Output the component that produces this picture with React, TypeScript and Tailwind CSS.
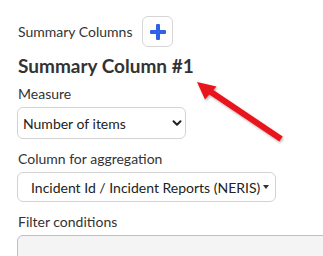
import React from "react";

function PlusIcon() {
  return (
    <svg width="16" height="16" viewBox="0 0 16 16" aria-hidden="true">
      <rect x="6" y="0" width="4" height="16" rx="1" fill="#2f63e6" />
      <rect x="0" y="6" width="16" height="4" rx="1" fill="#2f63e6" />
    </svg>
  );
}

function Chevron() {
  return (
    <svg width="10" height="10" viewBox="0 0 10 10" aria-hidden="true">
      <path
        d="M1.5 3.2L5 6.7l3.5-3.5"
        fill="none"
        stroke="#222"
        strokeWidth={2}
        strokeLinecap="round"
        strokeLinejoin="round"
      />
    </svg>
  );
}

function Pointer() {
  return (
    <svg
      className="pointer-events-none absolute left-0 top-0"
      width="323"
      height="256"
      viewBox="0 0 323 256"
      aria-hidden="true"
    >
      <defs>
        <filter id="shadow" x="-20%" y="-20%" width="140%" height="140%">
          <feDropShadow dx="1" dy="1.5" stdDeviation="1" floodColor="#000" floodOpacity="0.3" />
        </filter>
      </defs>
      <g filter="url(#shadow)">
        <line x1="281" y1="139" x2="208" y2="90" stroke="#e8131b" strokeWidth={6} strokeLinecap="butt" />
        <polygon points="197,82 216.5,86.5 205,99.5" fill="#e8131b" />
      </g>
    </svg>
  );
}

export default function App() {
  return (
    <div className="relative h-[256px] w-[323px] overflow-hidden bg-white font-['Lato',sans-serif] text-[14px] text-[#333]">
      <div className="pl-[17px] pt-[16px]">
        <div className="flex items-center">
          <span className="pl-px">Summary Columns</span>
          <button
            type="button"
            className="ml-[10px] flex h-[31px] w-[31px] items-center justify-center rounded-[6px] border border-[#d6d6d6] bg-white"
          >
            <PlusIcon />
          </button>
        </div>

        <h2 className="mt-[7px] pl-px text-[19px] font-bold leading-[23px] text-[#333]">
          Summary Column #1
        </h2>

        <label className="mt-[7px] block pl-px leading-[20px]">Measure</label>
        <div className="mt-[3px] flex h-[32px] w-[169px] items-center justify-between rounded-[6px] border border-[#d3d3d3] bg-white pl-[5px] pr-[3px] text-[#222]">
          <span>Number of items</span>
          <Chevron />
        </div>

        <label className="mt-[10px] block pl-px leading-[20px]">Column for aggregation</label>
        <div className="mt-[3px] flex h-[30px] w-[259px] items-center rounded-[6px] border border-[#d3d3d3] bg-white pl-[13px] text-[#222]">
          <span>Incident Id / Incident Reports (NERIS)</span>
          <span className="ml-[3px] h-0 w-0 border-x-[3.5px] border-t-[4px] border-x-transparent border-t-[#333]" />
        </div>

        <label className="mt-[10px] block pl-px leading-[20px]">Filter conditions</label>
        <div className="mt-[3px] h-[40px] w-[340px] rounded-[6px] border border-[#b9bfcc] bg-[#f4f4f5]" />
      </div>
      <Pointer />
    </div>
  );
}
